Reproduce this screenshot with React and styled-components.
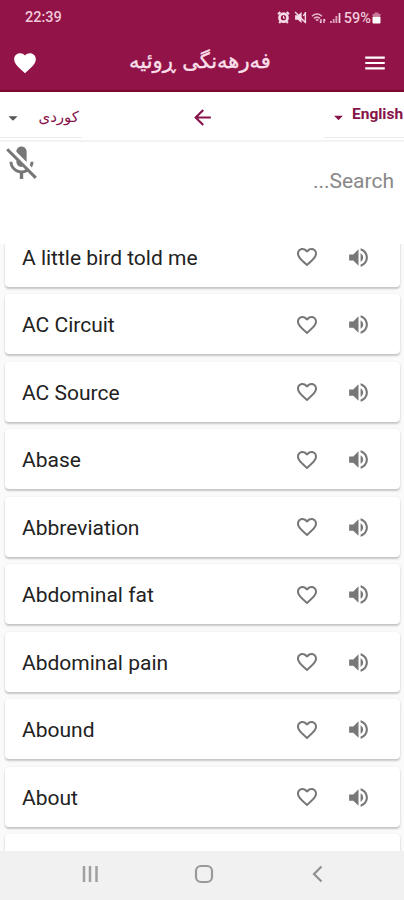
import React from 'react';
import styled, { createGlobalStyle } from 'styled-components';
import { MdFavorite, MdFavoriteBorder, MdMenu, MdArrowBack, MdArrowDropDown, MdMicOff, MdVolumeUp } from 'react-icons/md';

const words = ['A little bird told me', 'AC Circuit', 'AC Source', 'Abase', 'Abbreviation', 'Abdominal fat', 'Abdominal pain', 'Abound', 'About'];

function StatusIcons() {
  return (
    <StatusGroup>
      <svg width="13" height="13" viewBox="0 0 12 12">
        <path d="M1 3 L3 1 M11 3 L9 1 M2 11 L3 10 M10 11 L9 10" stroke="#f6dce7" strokeWidth="2" />
        <circle cx="6" cy="6.2" r="3.7" fill="none" stroke="#f6dce7" strokeWidth="2.500" />
        <path d="M6 4.4v2h1.6" fill="none" stroke="#f6dce7" />
      </svg>
      <svg width="13" height="13" viewBox="0 0 12 12">
        <path d="M1 4h2.500L7 1v10L3.500 8H1z" fill="#f6dce7" />
        <path d="M1 1l10 10M8.500 4.500l2-2.500M10.500 1v10" fill="none" stroke="#f6dce7" strokeWidth="1.3" />
      </svg>
      <svg width="15" height="12" viewBox="0 0 15 12">
        <path d="M1 4.200q5-4.400 10 0M3 6.400q3-2.600 6 0M5 8.400q1.200-1 2.400 0" fill="none" stroke="#e5b8cb" strokeWidth="1.5" />
        <path d="M10 7v4M8.800 9.500L10 11M13 11V7M13 7l1.200 1.500" fill="none" stroke="#f6dce7" strokeWidth="1.2" />
      </svg>
      <svg width="11" height="12" viewBox="0 0 11 12">
        <path d="M1 11V9M3.700 11V7M6.400 11V4" stroke="#d99cb6" strokeWidth="1.9" />
        <path d="M9.500 11V1" stroke="#f6dce7" strokeWidth="1.7" />
      </svg>
      <Percent>59%</Percent>
      <svg width="9" height="12" viewBox="0 0 9 12">
        <path d="M2.500 0.500h4v1.500h2v2H.5V2h2z" fill="#c9799a" />
        <rect x=".5" y="4.500" width="8" height="7" rx="1" fill="#fff" />
      </svg>
    </StatusGroup>
  );
}

function WordCard({ word }) {
  return (
    <Card>
      <Word>{word}</Word>
      <MdFavoriteBorder size={24} />
      <SpeakerSlot><MdVolumeUp size={25} /></SpeakerSlot>
    </Card>
  );
}

export default function App() {
  return (
    <>
      <GlobalStyle />
      <Screen>
        <TopArea>
          <StatusBar>
            <Clock>22:39</Clock>
            <StatusIcons />
          </StatusBar>
          <AppBar>
            <MdFavorite size={26} />
            <Title dir="rtl">فەرهەنگی ڕوئیە</Title>
            <MdMenu size={26} />
          </AppBar>
        </TopArea>
        <LanguageBar>
          <Source>
            <MdArrowDropDown size={22} color="#555" />
            <Kurdish dir="rtl">کوردی</Kurdish>
          </Source>
          <ArrowSlot><MdArrowBack size={25} /></ArrowSlot>
          <Target>
            <MdArrowDropDown size={21} />
            <English>English</English>
          </Target>
        </LanguageBar>
        <SearchArea>
          <MdMicOff size={41} color="#777" />
          <Placeholder>...Search</Placeholder>
        </SearchArea>
        <WordList>
          {words.map((word) => <WordCard key={word} word={word} />)}
          <Card />
        </WordList>
        <NavBar>
          <svg width="18" height="18" viewBox="0 0 18 18"><path d="M3 1v16M9 1v16M15.500 1v16" stroke="#a0a0a0" strokeWidth="2.500" /></svg>
          <svg width="20" height="20" viewBox="0 0 20 20"><rect x="2" y="2" width="16" height="16" rx="5" fill="none" stroke="#999" strokeWidth="2.200" /></svg>
          <svg width="18" height="18" viewBox="0 0 18 18"><path d="M12.500 1.500L5 9l7.500 7.500" fill="none" stroke="#909090" strokeWidth="2.200" /></svg>
        </NavBar>
      </Screen>
    </>
  );
}

const GlobalStyle = createGlobalStyle`
  * { box-sizing: border-box; }
  body { margin: 0; background: #fff; font-family: Roboto, "DejaVu Sans", sans-serif; }
  svg { display: block; flex-shrink: 0; }
`;
const Screen = styled.div`
  width: 404px;
  height: 900px;
  display: flex;
  flex-direction: column;
  overflow: hidden;
`;
const TopArea = styled.header`
  height: 92px;
  flex-shrink: 0;
  background: #921347;
  border-bottom: 2px solid #780b2e;
`;
const StatusBar = styled.div`
  height: 34px;
  padding: 1px 23px 0 25px;
  display: flex;
  align-items: center;
  justify-content: space-between;
`;
const Clock = styled.span`
  font-size: 14.5px;
  font-weight: 500;
  color: #efc9d9;
`;
const StatusGroup = styled.div`
  display: flex;
  align-items: center;
  gap: 4px;
`;
const Percent = styled.span`
  margin: 1px -3px 0 -1px;
  font-size: 14.5px;
  font-weight: 500;
  color: #efc9d9;
`;
const AppBar = styled.div`
  height: 56px;
  padding: 1px 16px 0 12px;
  display: flex;
  align-items: center;
  justify-content: space-between;
  color: #fff;
`;
const Title = styled.h1`
  margin: -3px 0 0;
  font-family: "DejaVu Sans", sans-serif;
  font-size: 21px;
  font-weight: 400;
  line-height: 30px;
  color: #f8dfe9;
  -webkit-text-stroke: 0.4px #f8dfe9;
`;
const LanguageBar = styled.div`
  height: 50px;
  flex-shrink: 0;
  display: grid;
  grid-template-columns: 1fr 25px 1fr;
  align-items: center;
  border-bottom: 2px solid #f3f3f3;
  color: #86134a;
`;
const ArrowSlot = styled.div`
  padding-top: 2px;
`;
const Select = styled.div`
  height: 44px;
  display: flex;
  align-items: center;
  border-bottom: 1px solid #ececec;
`;
const Source = styled(Select)`
  width: 82px;
  padding: 4px 3px 0 2px;
  justify-content: space-between;
`;
const Target = styled(Select)`
  width: 80px;
  padding: 4px 0 0 4px;
  gap: 3px;
  justify-self: end;
`;
const Kurdish = styled.span`
  margin-top: -2px;
  font-family: "DejaVu Sans", sans-serif;
  font-size: 15px;
`;
const English = styled.span`
  margin-top: -7px;
  font-size: 15.5px;
  font-weight: 700;
`;
const SearchArea = styled.div`
  height: 102px;
  flex-shrink: 0;
  padding: 1px 10px 0 1px;
  display: flex;
  justify-content: space-between;
`;
const Placeholder = styled.div`
  padding-top: 25px;
  font-size: 21px;
  line-height: 26px;
  color: #888;
`;
const WordList = styled.main`
  height: 607px;
  flex-shrink: 0;
  overflow: hidden;
  padding: 0 4px 0 5px;
  display: flex;
  flex-direction: column;
  gap: 7.5px;
  background: #fafafa;
`;
const Card = styled.div`
  height: 60px;
  flex-shrink: 0;
  padding: 1px 29px 0 17px;
  display: flex;
  align-items: center;
  background: #fff;
  border-radius: 4px;
  box-shadow: 0 2px 2px rgba(0, 0, 0, 0.2), 0 0 2px rgba(0, 0, 0, 0.08);
  color: #777;
  &:first-child { margin-top: -17.4px; }
`;
const Word = styled.span`
  flex: 1;
  padding-top: 1px;
  font-size: 21px;
  color: #222;
`;
const SpeakerSlot = styled.div`
  margin-left: 27px;
`;
const NavBar = styled.nav`
  flex: 1;
  padding: 0 77px 3px 81px;
  display: flex;
  align-items: center;
  justify-content: space-between;
  background: #f1f1f1;
`;
